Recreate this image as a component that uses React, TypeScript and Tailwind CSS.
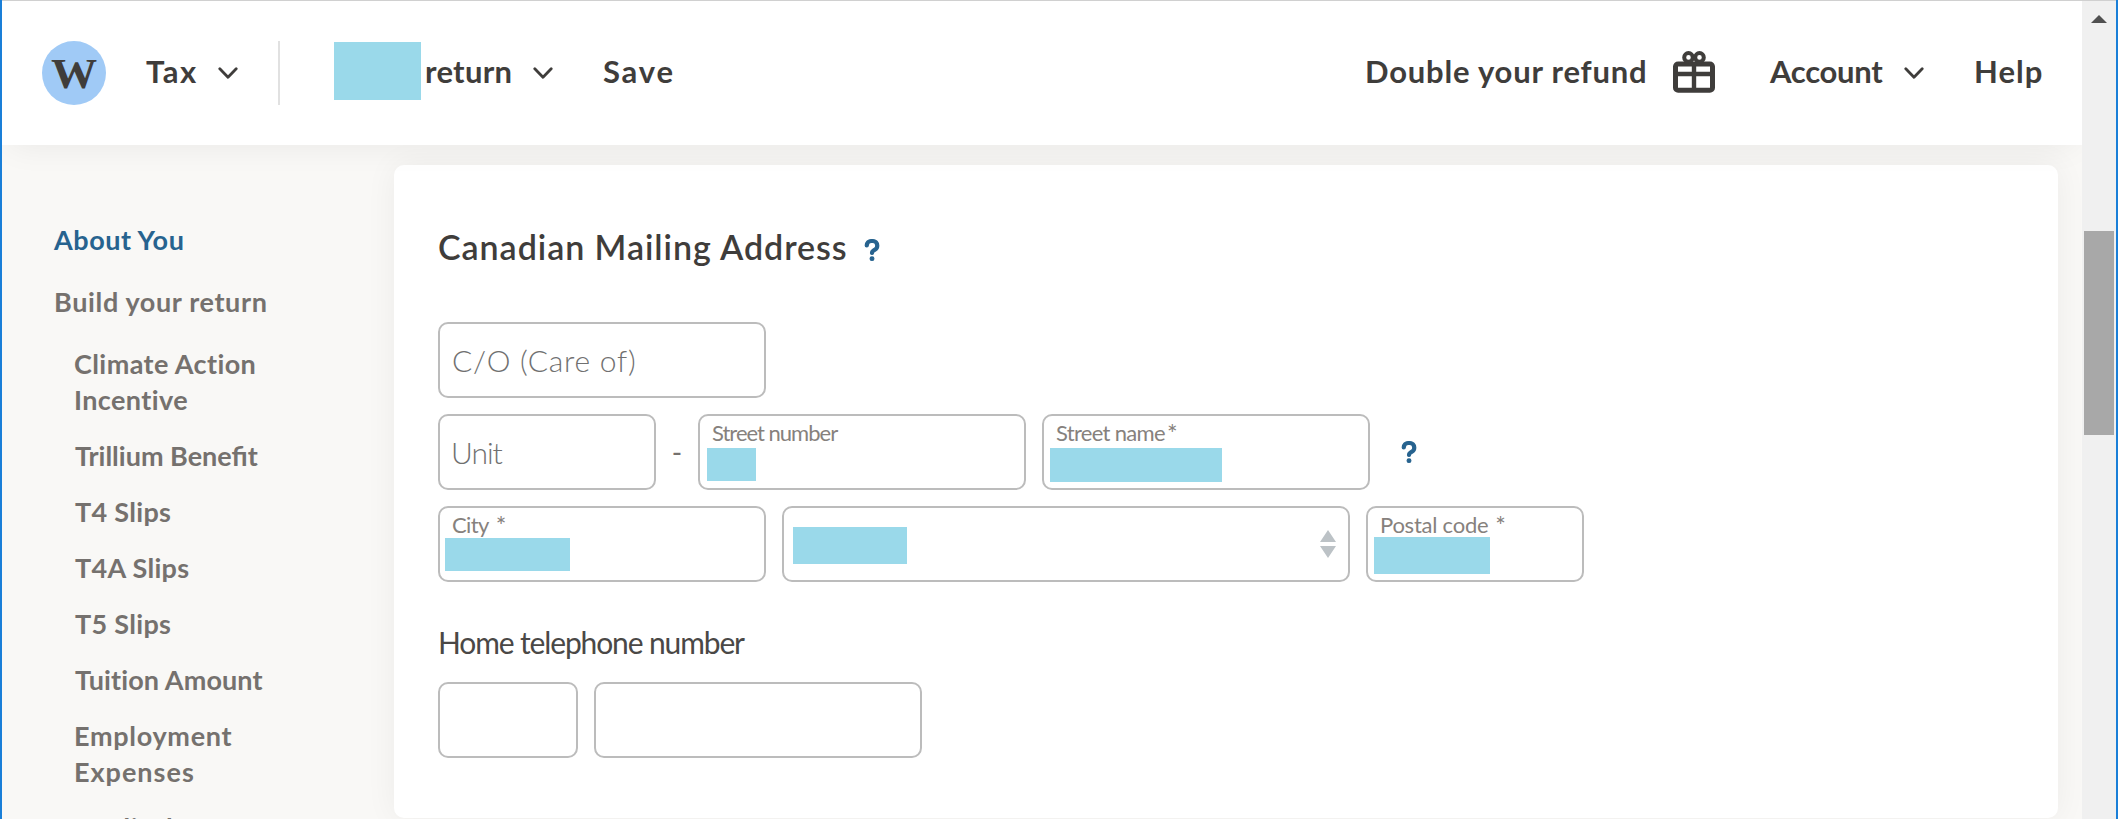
import type { ReactNode } from "react";
import { FaQuestion } from "react-icons/fa6";

function Chevron({ className = "" }: { className?: string }) {
  return (
    <svg className={`h-3 w-5 shrink-0 ${className}`} viewBox="0 0 20 12" fill="none" stroke="currentColor" strokeWidth="2.8" strokeLinecap="round" strokeLinejoin="round">
      <path d="M1.8 1.8 10 10.2 18.2 1.8" />
    </svg>
  );
}

function Gift({ className = "" }: { className?: string }) {
  return (
    <svg className={`h-[42px] w-[42px] shrink-0 ${className}`} viewBox="0 0 42 42" fill="none" stroke="currentColor">
      <rect x="2.5" y="12.9" width="37" height="26.4" rx="2.6" strokeWidth="5" />
      <path d="M3 23h36" strokeWidth="4.4" />
      <path d="M21 12v27" strokeWidth="4.4" />
      <ellipse cx="15.5" cy="6.4" rx="4.3" ry="4.3" strokeWidth="4" />
      <ellipse cx="26.5" cy="6.4" rx="4.3" ry="4.3" strokeWidth="4" />
    </svg>
  );
}

function HelpIcon({ className = "" }: { className?: string }) {
  return <FaQuestion className={`h-6 w-4 shrink-0 overflow-visible stroke-[#27638f] stroke-[26] text-[#27638f] ${className}`} />;
}

function NavText({ children, className = "" }: { children: ReactNode; className?: string }) {
  return <span className={`shrink-0 pb-1 text-[31px] leading-10 font-bold whitespace-nowrap ${className}`}>{children}</span>;
}

function Header() {
  return (
    <header className="relative z-10 flex h-36 shrink-0 items-center bg-white text-[#3f3d3b] shadow-[0_8px_32px_-8px_rgba(0,0,0,0.07)]">
      <div className="ml-10 flex size-16 shrink-0 items-center justify-center rounded-full bg-[#a0caf6]">
        <span className="scale-x-110 pt-px font-['Liberation_Serif',serif] text-[42px] leading-[48px] font-bold">W</span>
      </div>
      <NavText className="ml-10 w-[51px] tracking-[1.5px]">Tax</NavText>
      <Chevron className="ml-[21px]" />
      <div className="ml-10 h-16 w-0.5 shrink-0 bg-[#e1e1e1]" />
      <div className="ml-[54px] h-[58px] w-[87px] shrink-0 -translate-y-0.5 bg-[#9ad9ea]" />
      <NavText className="ml-[4px] w-[87px] tracking-[0.3px]">return</NavText>
      <Chevron className="ml-[21px]" />
      <NavText className="ml-[50px] tracking-[1.8px]">Save</NavText>
      <NavText className="ml-auto w-[281px] tracking-[0.8px]">Double your refund</NavText>
      <Gift className="ml-[27px] -translate-y-px" />
      <NavText className="ml-[55px] w-[114px] tracking-[-0.3px]">Account</NavText>
      <Chevron className="ml-5" />
      <NavText className="mr-[41px] ml-[50px] w-[67px] tracking-[1px]">Help</NavText>
    </header>
  );
}

function Sidebar() {
  return (
    <nav className="w-[392px] shrink-0 pt-[77px] pl-[51px] text-[27px] leading-9 font-bold whitespace-nowrap text-[#75716e]">
      <div className="pl-px tracking-[0.55px] text-[#27638f]">About You</div>
      <div className="mt-[26px] pl-px tracking-[0.64px]">Build your return</div>
      <ul className="mt-[26px] flex flex-col gap-5 pl-[21px]">
        <li>
          <div className="tracking-[0.4px]">Climate Action</div>
          <div className="tracking-[0.4px]">Incentive</div>
        </li>
        <li className="pl-px tracking-normal">Trillium Benefit</li>
        <li className="pl-px tracking-[0.3px]">T4 Slips</li>
        <li className="pl-px tracking-[0.3px]">T4A Slips</li>
        <li className="pl-px tracking-[0.3px]">T5 Slips</li>
        <li className="pl-px tracking-[0.1px]">Tuition Amount</li>
        <li>
          <div className="tracking-[0.7px]">Employment</div>
          <div className="tracking-[1px]">Expenses</div>
        </li>
        <li className="tracking-[0.6px]">
          <div>Medical</div>
          <div>Expenses</div>
        </li>
      </ul>
    </nav>
  );
}

function Field({ children, className = "" }: { children?: ReactNode; className?: string }) {
  return <div className={`relative h-[76px] shrink-0 rounded-[10px] border-2 border-[#bcbcbc] bg-white whitespace-nowrap ${className}`}>{children}</div>;
}

function Placeholder({ children, className = "" }: { children: ReactNode; className?: string }) {
  return <div className={`text-[30px] leading-[72px] font-light text-[#707070] ${className}`}>{children}</div>;
}

function Label({ children, className = "" }: { children: ReactNode; className?: string }) {
  return <div className={`flex pt-[5px] text-[22px] leading-6 text-[#86817d] ${className}`}>{children}</div>;
}

function Redaction({ className }: { className: string }) {
  return <div className={`absolute bg-[#9ad9ea] ${className}`} />;
}

function AddressCard() {
  return (
    <section className="mt-5 h-[653px] w-[1664px] shrink-0 rounded-[10px] bg-white pt-[60px] pl-11 shadow-[0_0_32px_rgba(0,0,0,0.055)]">
      <div className="flex h-11 items-center">
        <h2 className="w-[426px] text-[34px] leading-[44px] font-semibold tracking-[0.95px] whitespace-nowrap text-[#3f3d3b]">Canadian Mailing Address</h2>
        <HelpIcon className="mt-1.5" />
      </div>
      <div className="mt-[53px] flex flex-col gap-4">
        <Field className="w-[328px]">
          <Placeholder className="pl-3 tracking-[0.72px]">C/O (Care of)</Placeholder>
        </Field>
        <div className="flex items-center">
          <Field className="w-[218px]">
            <Placeholder className="pl-[11px] tracking-[-1px]">Unit</Placeholder>
          </Field>
          <span className="w-[42px] text-center text-[28px] leading-9 text-[#75716e]">-</span>
          <Field className="w-[328px]">
            <Label className="pl-3 tracking-[-1px]">Street number</Label>
            <Redaction className="top-8 left-[7px] h-[33px] w-[49px]" />
          </Field>
          <Field className="ml-4 w-[328px]">
            <Label className="pl-3 tracking-[-0.69px]">
              Street name<span className="ml-0.5 text-[25px]">*</span>
            </Label>
            <Redaction className="top-8 left-1.5 h-[34px] w-[172px]" />
          </Field>
          <HelpIcon className="ml-[31px]" />
        </div>
        <div className="flex gap-4">
          <Field className="w-[328px]">
            <Label className="pl-3 tracking-[-0.6px]">
              City<span className="ml-[7px] text-[25px]">*</span>
            </Label>
            <Redaction className="top-[30px] left-[5px] h-[33px] w-[125px]" />
          </Field>
          <Field className="w-[568px]">
            <Redaction className="top-[19px] left-[9px] h-[37px] w-[114px]" />
            <svg className="absolute top-[22px] right-3 h-7 w-4 fill-[#bcc2c6]" viewBox="0 0 16 28">
              <path d="M8 0 16 12H0zM0 16h16L8 28z" />
            </svg>
          </Field>
          <Field className="w-[218px]">
            <Label className="pl-3 tracking-[-0.24px]">
              Postal code<span className="ml-[7px] text-[25px]">*</span>
            </Label>
            <Redaction className="top-[29px] left-1.5 h-[37px] w-[116px]" />
          </Field>
        </div>
      </div>
      <div className="mt-[42px] text-[30px] leading-9 tracking-[-1.13px] text-[#4a4846]">Home telephone number</div>
      <div className="mt-[22px] flex gap-4">
        <Field className="w-[140px]" />
        <Field className="w-[328px]" />
      </div>
    </section>
  );
}

function Scrollbar() {
  return (
    <div className="flex w-[34px] shrink-0 flex-col items-center bg-[#f0f0f0]">
      <svg className="mt-3.5 h-2 w-4 fill-[#505050]" viewBox="0 0 16 8">
        <path d="M8 0 16 8H0z" />
      </svg>
      <div className="mt-[208px] h-[204px] w-[30px] bg-[#a8a8a8]" />
    </div>
  );
}

export default function App() {
  return (
    <div className="flex h-[819px] w-[2118px] overflow-hidden border-x-2 border-x-[#1a7fd8] bg-[#f9f8f6] font-[Lato,sans-serif]">
      <div className="flex min-w-0 flex-1 border-t border-t-[#d0d0d0]">
        <div className="flex min-w-0 flex-1 flex-col overflow-hidden">
          <Header />
          <div className="flex min-h-0 flex-1">
            <Sidebar />
            <AddressCard />
          </div>
        </div>
        <Scrollbar />
      </div>
    </div>
  );
}
